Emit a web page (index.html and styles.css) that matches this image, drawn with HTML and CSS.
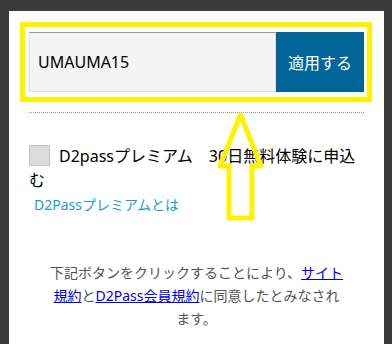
FILE: index.html
```html
<!DOCTYPE html>
<html lang="ja">

<head>
    <meta charset="UTF-8" />
    <meta name="viewport" content="width=device-width, initial-scale=1.0" />
    <title>クーポン適用</title>
    <link rel="stylesheet" href="styles.css">
</head>

<body>

    <section class="panel">
        <form class="coupon">
            <input class="coupon-input" type="text" value="UMAUMA15" />
            <button class="coupon-btn" type="button">適用する</button>
        </form>

        <div class="divider"></div>

        <label class="trial">
            <span class="check"></span>D2passプレミアム　30日無料体験に申込む
        </label>
        <a class="about" href="#">D2Passプレミアムとは</a>

        <p class="terms">
            下記ボタンをクリックすることにより、<a href="#">サイト規約</a>と<a href="#">D2Pass会員規約</a>に同意したとみなされます。
        </p>
    </section>

    <!-- 注釈（黄色い枠と矢印） -->
    <div class="mark-box"></div>
    <svg class="mark-arrow" width="52" height="118" viewBox="0 0 52 118">
        <polygon points="25.5,7 46,58 37,58 37,110 14,110 14,58 5,58" />
    </svg>

</body>

</html>
```

FILE: styles.css
```css
body {
    margin: 0;
    padding: 0;
    background-color: #3b3b3b;
    font-family: "Noto Sans", "Noto Sans CJK JP", sans-serif;
    overflow: hidden;
}

.panel {
    box-sizing: border-box;
    min-height: calc(100vh - 11px);
    margin: 11px 8px 0 9px;
    padding: 21px 20px 20px;
    background-color: #fff;
}

.coupon {
    display: flex;
    height: 60px;
    margin: 0;
}

.coupon-input {
    flex: 1;
    min-width: 0;
    margin: 0;
    padding: 0 8px;
    font-family: inherit;
    font-size: 16px;
    color: #000;
    background-color: #f4f4f4;
    border: 1px solid #dedede;
    border-top-color: #9a9a9a;
    outline: none;
}

.coupon-btn {
    width: 88px;
    margin: 0;
    padding: 0;
    font-family: inherit;
    font-size: 16px;
    color: #fff;
    background-color: #006699;
    border: none;
    cursor: pointer;
}

.divider {
    margin-top: 20px;
    border-top: 1px dotted #9a9a9a;
}

.trial {
    display: block;
    margin-top: 31px;
    font-size: 16px;
    line-height: 24px;
    color: #000;
}

.check {
    display: inline-block;
    box-sizing: border-box;
    width: 21px;
    height: 21px;
    margin-right: 9px;
    vertical-align: -4px;
    background-color: #dcdcdc;
    border: 1px solid #c4c4c4;
}

.about {
    display: block;
    margin-left: 5px;
    font-size: 14px;
    line-height: 26px;
    color: #1d9bd8;
    text-decoration: none;
}

.terms {
    margin: 43px 20px 0;
    font-size: 14px;
    line-height: 23px;
    color: #555;
    text-align: center;
}

.terms a {
    color: #0000ee;
    text-decoration: underline;
}

.mark-box {
    position: absolute;
    left: 20px;
    top: 22px;
    box-sizing: border-box;
    width: 352px;
    height: 80px;
    border: 5px solid #fff200;
    pointer-events: none;
}

.mark-arrow {
    position: absolute;
    left: 215px;
    top: 108px;
    pointer-events: none;
}

.mark-arrow polygon {
    fill: none;
    stroke: #fff200;
    stroke-width: 5;
    stroke-linejoin: round;
}
```
